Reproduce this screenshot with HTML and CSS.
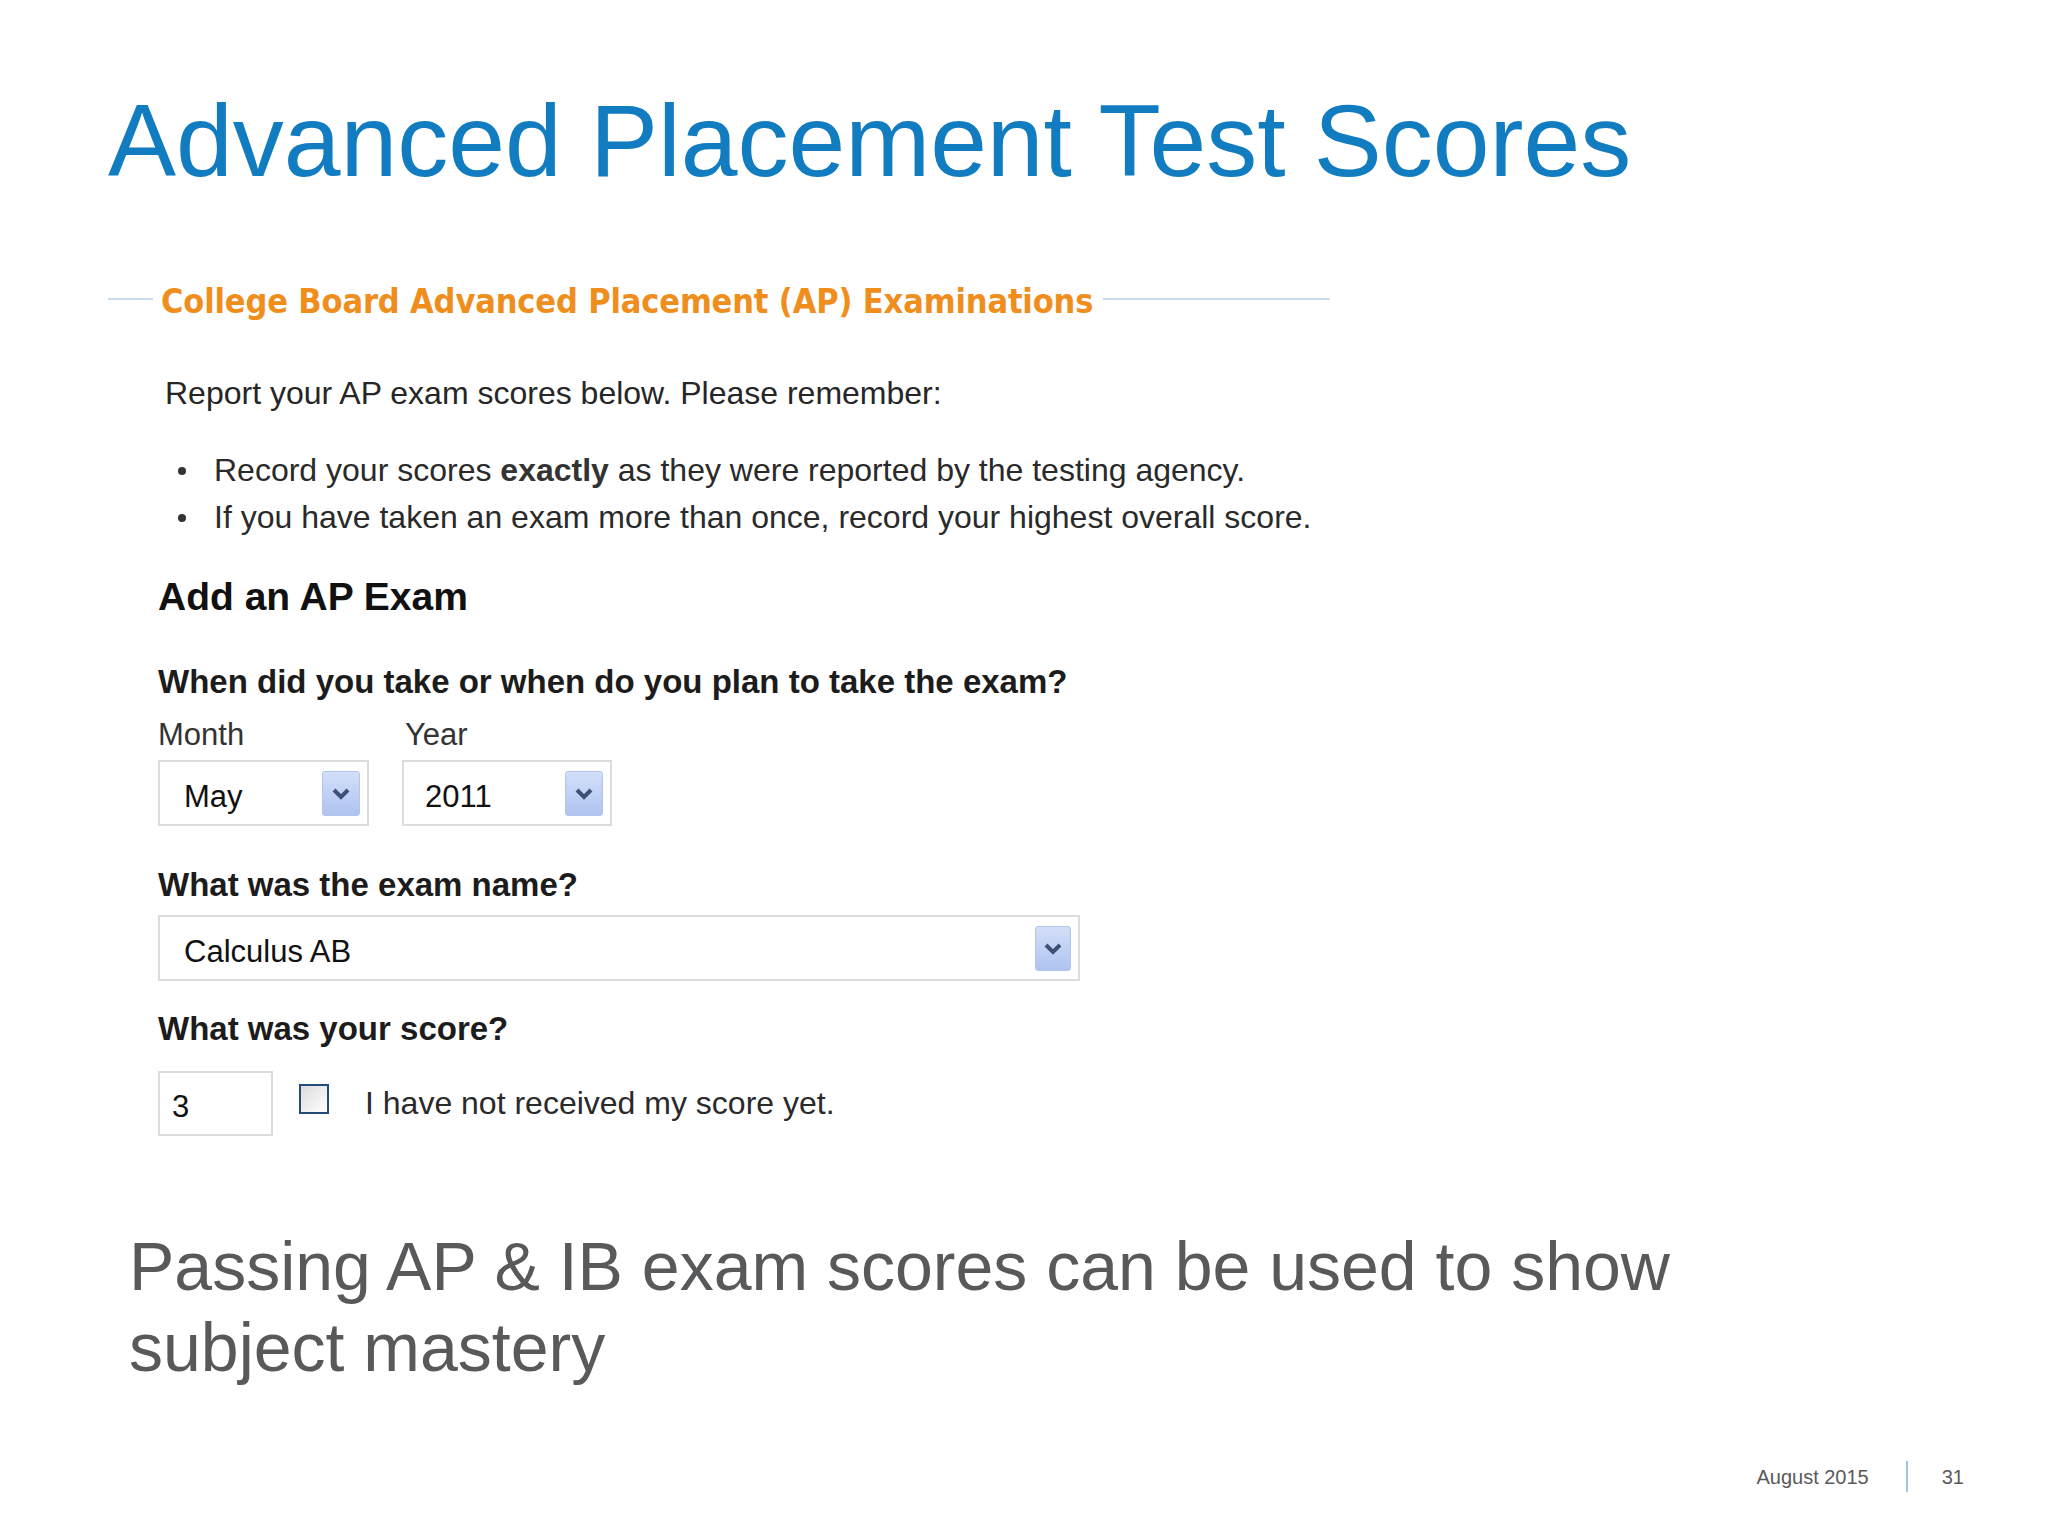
FILE: index.html
```html
<!DOCTYPE html>
<html lang="en">
<head>
<meta charset="utf-8">
<title>Advanced Placement Test Scores</title>
<link rel="stylesheet" href="styles.css">
</head>
<body>
<div class="slide">
  <h1 class="title">Advanced Placement Test Scores</h1>

  <div class="legend">
    <span class="legend-line legend-line-left"></span>
    <span class="legend-text">College Board Advanced Placement (AP) Examinations</span>
    <span class="legend-line legend-line-right"></span>
  </div>

  <div class="form">
    <p class="intro">Report your AP exam scores below. Please remember:</p>
    <ul class="rules">
      <li><span class="dot"></span><span>Record your scores <b>exactly</b> as they were reported by the testing agency.</span></li>
      <li><span class="dot"></span><span>If you have taken an exam more than once, record your highest overall score.</span></li>
    </ul>

    <h2 class="add">Add an AP Exam</h2>

    <p class="question q1">When did you take or when do you plan to take the exam?</p>
    <div class="date-row">
      <div class="field month">
        <span class="label">Month</span>
        <div class="select">
          <span class="value">May</span>
          <span class="btn"><svg width="20" height="13" viewBox="0 0 20 13"><path d="M3 3 L10 10 L17 3" fill="none" stroke="#3e5078" stroke-width="4"/></svg></span>
        </div>
      </div>
      <div class="field year">
        <span class="label">Year</span>
        <div class="select">
          <span class="value">2011</span>
          <span class="btn"><svg width="20" height="13" viewBox="0 0 20 13"><path d="M3 3 L10 10 L17 3" fill="none" stroke="#3e5078" stroke-width="4"/></svg></span>
        </div>
      </div>
    </div>

    <p class="question q2">What was the exam name?</p>
    <div class="select exam">
      <span class="value">Calculus AB</span>
      <span class="btn btn-exam"><svg width="20" height="13" viewBox="0 0 20 13"><path d="M3 3 L10 10 L17 3" fill="none" stroke="#3e5078" stroke-width="4"/></svg></span>
    </div>

    <p class="question q3">What was your score?</p>
    <div class="score-row">
      <div class="score-input">3</div>
      <span class="checkbox"></span>
      <span class="check-label">I have not received my score yet.</span>
    </div>
  </div>

  <p class="summary">Passing AP &amp; IB exam scores can be used to show<br>subject mastery</p>

  <div class="footer">
    <span class="date">August 2015</span>
    <span class="divider"></span>
    <span class="page">31</span>
  </div>
</div>
</body>
</html>
```

FILE: styles.css
```css
html, body {
  margin: 0;
  padding: 0;
  background: #ffffff;
}

.slide {
  width: 2048px;
  height: 1536px;
  box-sizing: border-box;
  padding: 90px 0 0 108px;
  font-family: "Liberation Sans", Arial, sans-serif;
  overflow: hidden;
}

.title {
  margin: 0;
  font-size: 102px;
  line-height: 1;
  font-weight: normal;
  color: #127cc1;
  white-space: nowrap;
}

.legend {
  display: flex;
  align-items: center;
  margin-top: 92px;
  width: 1222px;
}

.legend-line {
  height: 2px;
  background: #c9dcef;
  margin-top: -4px;
}

.legend-line-left {
  width: 45px;
  margin-right: 8px;
}

.legend-line-right {
  flex: 1;
  margin-left: 10px;
}

.legend-text {
  font-family: "DejaVu Sans Condensed", "DejaVu Sans", sans-serif;
  font-weight: bold;
  font-size: 34px;
  letter-spacing: -0.14px;
  line-height: 1;
  color: #ef8e1d;
  white-space: nowrap;
}

.form {
  padding-left: 50px;
  color: #222;
}

.intro {
  margin: 59px 0 0 0;
  padding-left: 7px;
  font-size: 32px;
  line-height: 1;
  color: #262626;
}

.rules {
  list-style: none;
  margin: 38px 0 0 0;
  padding: 0;
}

.rules li {
  display: flex;
  align-items: center;
  font-size: 32px;
  line-height: 47px;
  color: #2a2a2a;
}

.rules b {
  color: #333;
}

.dot {
  width: 8px;
  height: 8px;
  border-radius: 50%;
  background: #333;
  margin-left: 20px;
  margin-right: 28px;
  flex: none;
}

.add {
  margin: 36px 0 0 0;
  font-size: 39px;
  line-height: 1;
  font-weight: bold;
  color: #111;
}

.question {
  margin: 0;
  font-size: 33px;
  line-height: 1;
  font-weight: bold;
  color: #1c1c1c;
}

.q1 { margin-top: 49px; }
.q2 { margin-top: 42px; }
.q3 { margin-top: 31px; }

.date-row {
  display: flex;
  gap: 33px;
  margin-top: 21px;
}

.field {
  display: flex;
  flex-direction: column;
}

.label {
  font-size: 31px;
  line-height: 1;
  color: #333;
  height: 31px;
}

.year .label {
  padding-left: 3px;
}

.select {
  display: flex;
  align-items: center;
  box-sizing: border-box;
  height: 66px;
  border: 2px solid #dcdcdc;
  background: #fff;
  margin-top: 10px;
}

.month .select { width: 211px; }
.year .select { width: 210px; }

.select.exam {
  width: 922px;
  margin-top: 14px;
}

.value {
  font-size: 31px;
  line-height: 1;
  color: #111;
  padding-left: 24px;
  padding-top: 6px;
}

.year .value {
  padding-left: 21px;
}

.btn {
  margin-left: auto;
  margin-right: 7px;
  width: 38px;
  height: 45px;
  box-sizing: border-box;
  border: 1px solid #b3c5ec;
  border-radius: 3px;
  background: linear-gradient(#d3dff9, #aec3f0);
  display: flex;
  align-items: center;
  justify-content: center;
}

.btn-exam {
  width: 36px;
}

.score-row {
  display: flex;
  align-items: flex-start;
  margin-top: 26px;
}

.score-input {
  box-sizing: border-box;
  width: 115px;
  height: 65px;
  border: 2px solid #dcdcdc;
  font-size: 31px;
  line-height: 1;
  color: #111;
  padding: 18px 0 0 12px;
}

.checkbox {
  box-sizing: border-box;
  width: 30px;
  height: 30px;
  margin: 13px 0 0 26px;
  border: 2px solid #234c7a;
  background: linear-gradient(135deg, #dcdcdc, #ffffff);
}

.check-label {
  margin: 16px 0 0 36px;
  font-size: 32px;
  line-height: 1;
  color: #2a2a2a;
}

.summary {
  margin: 90px 0 0 0;
  padding-left: 21px;
  font-size: 68px;
  line-height: 81px;
  color: #58595b;
  white-space: nowrap;
}

.footer {
  display: flex;
  align-items: center;
  justify-content: flex-end;
  margin-top: 73px;
  padding-right: 84px;
  font-size: 20px;
  line-height: 1;
  color: #5a5a5a;
}

.divider {
  width: 2px;
  height: 31px;
  background: #9fc4e6;
  margin: 0 34px 0 37px;
}
```
